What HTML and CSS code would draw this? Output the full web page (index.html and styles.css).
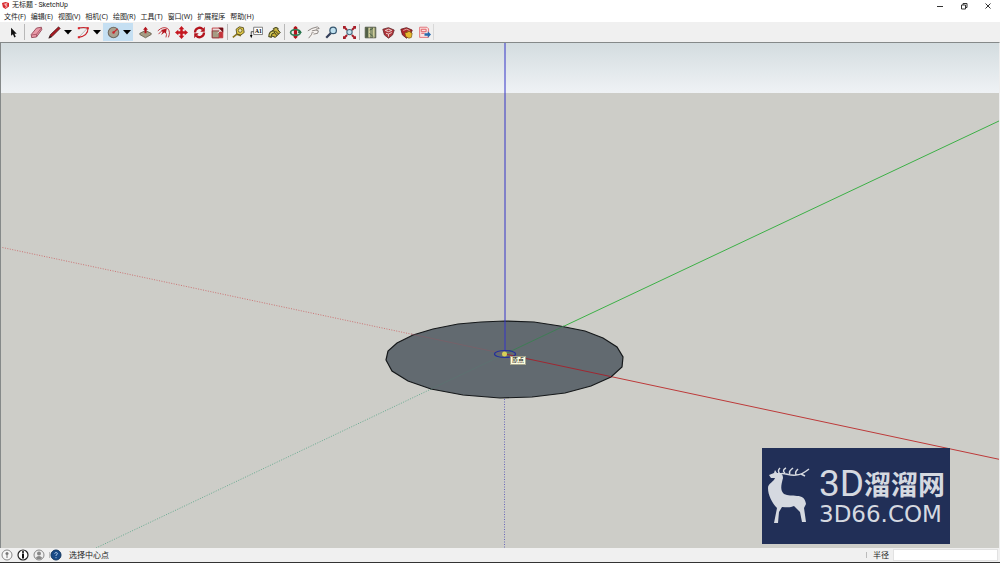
FILE: index.html
```html
<!DOCTYPE html>
<html lang="zh-CN">
<head>
<meta charset="utf-8">
<title>无标题 - SketchUp</title>
<link rel="stylesheet" href="styles.css">
</head>
<body>
<div class="app">
  <header class="titlebar">
    <svg class="app-icon" viewBox="0 0 8 8"><path d="M0 1l4-1 4 1v4L4 8 1 6z" fill="#d8262c"/><path d="M2 2.600l3-.8 1 .5-2.500.7v.8l2 .3v1.500L3.500 6" fill="none" stroke="#fff" stroke-width=".7"/></svg>
    <h1 class="title">无标题 - SketchUp</h1>
    <div class="window-buttons">
      <button aria-label="最小化"><svg viewBox="0 0 8 8"><path d="M1 4.500h6"/></svg></button>
      <button aria-label="还原"><svg viewBox="0 0 8 8"><path d="M1.500 3h4v4h-4zM3 3V1.500h4v4H5.500"/></svg></button>
      <button aria-label="关闭"><svg viewBox="0 0 8 8"><path d="M1.500 1.500l5 5M6.500 1.500l-5 5"/></svg></button>
    </div>
  </header>
  <nav class="menubar">
    <button>文件(F)</button><button>编辑(E)</button><button>视图(V)</button><button>相机(C)</button><button>绘图(R)</button><button>工具(T)</button><button>窗口(W)</button><button>扩展程序</button><button>帮助(H)</button>
  </nav>
  <div class="toolbar" role="toolbar">
    <button class="tool" aria-label="选择"><svg viewBox="0 0 16 16"><path d="M5 2v10l2.300-2 1.700 4 1.800-.8L9.200 9.400H12z" fill="#111"/></svg></button>
    <span class="separator wide"></span>
    <button class="tool" aria-label="擦除"><svg viewBox="0 0 16 16"><path d="M1.500 10.500L8 2.500l6-1 .5 3-6.500 9-6 .8z" fill="#e99aa8" stroke="#8b3b4b"/><path d="M2 11l6-.8 6-7.700M8 10.200v3" fill="none" stroke="#a34b5c"/></svg></button>
    <div class="split">
      <button class="tool" aria-label="直线"><svg viewBox="0 0 16 16"><path d="M1 15l2-4.500L13 1l2 2L5 13z" fill="#a81a22" stroke="#3f1518" stroke-width=".8"/><path d="M1 15l1.500-3.200L4.500 13.500z" fill="#222"/></svg></button>
      <button class="arrow" aria-label="直线选项"><svg viewBox="0 0 8 6"><path d="M0 1h8L4 5.500z"/></svg></button>
    </div>
    <div class="split">
      <button class="tool" aria-label="圆弧"><svg viewBox="0 0 16 16"><path d="M2 2.500h11L2 14" fill="none" stroke="#999" stroke-width=".8"/><path d="M2 2.500Q8 1 13.500 2.500Q14 12 2 14" fill="none" stroke="#c9232b" stroke-width="1.300"/><path d="M1 1.500h2.500V4H1zM12 1.500h2.500V4H12zM1 12.500h2.500V15H1z" fill="#d8262c"/></svg></button>
      <button class="arrow" aria-label="圆弧选项"><svg viewBox="0 0 8 6"><path d="M0 1h8L4 5.500z"/></svg></button>
    </div>
    <div class="split active">
      <button class="tool" aria-label="圆"><svg viewBox="0 0 16 16"><circle cx="8" cy="8" r="6.500" fill="#a9a190" stroke="#6f6a60" stroke-width="1.300"/><path d="M8 8l5-4.500" stroke="#c9232b" stroke-width="1.400"/><circle cx="8" cy="8" r="1.500" fill="#c9232b"/></svg></button>
      <button class="arrow" aria-label="形状选项"><svg viewBox="0 0 8 6"><path d="M0 1h8L4 5.500z"/></svg></button>
    </div>
    <div class="group">
      <button class="tool" aria-label="推拉"><svg viewBox="0 0 16 16"><path d="M1 9l7-3.500L15 9v1.500L8 14.500 1 10.500z" fill="#a59c84" stroke="#59523f" stroke-width=".9"/><path d="M8 1l3 3.500H9.200V9H6.800V4.500H5z" fill="#b3131c"/></svg></button>
      <button class="tool" aria-label="路径跟随"><svg viewBox="0 0 16 16"><path d="M1 6Q7 0 13 3q4 4 1 11M2 10Q6 4 10 7q3 3 1 7" fill="none" stroke="#b92730" stroke-width="1.100"/><path d="M5 5l7-2-1 6-2-1-4 3 2-4z" fill="#b3131c"/></svg></button>
      <button class="tool" aria-label="移动"><svg viewBox="0 0 16 16"><path d="M8 0l3.500 4H9.500v2.500H12v-2L16 8l-4 3.500v-2H9.500V12h2L8 16l-3.500-4h2V9.500H4v2L0 8l4-3.500v2h2.500V4h-2z" fill="#c5161f"/></svg></button>
      <button class="tool" aria-label="旋转"><svg viewBox="0 0 16 16"><path d="M2.500 8a5.500 5.500 0 0 1 9.500-4M13.500 8a5.500 5.500 0 0 1-9.500 4" fill="none" stroke="#b3131c" stroke-width="2.800"/><path d="M14.500 1v6H9zM1.500 15V9H7z" fill="#b3131c"/></svg></button>
      <button class="tool" aria-label="缩放"><svg viewBox="0 0 16 16"><path d="M1.500 2.500h13v12h-13z" fill="#e9dada" stroke="#bd2730"/><path d="M1.500 6h8.500v8.500H1.500z" fill="#a59c84" stroke="#8b3034"/><path d="M10 7h4.500v7.500H10z" fill="#c4343c"/><path d="M8 9l4-4" stroke="#fff"/><path d="M9 2h6v6z" fill="#701018"/></svg></button>
    </div>
    <span class="separator"></span>
    <button class="tool" aria-label="卷尺"><svg viewBox="0 0 16 16"><path d="M1 14l5-4 5 2" fill="none" stroke="#88751f" stroke-width="2"/><path d="M5 4l4-3 5 1 1 6-4 3-5-1z" fill="#dec643" stroke="#4b431c"/><circle cx="10" cy="5.500" r="2.300" fill="#f1e9b0" stroke="#5e5526"/></svg></button>
    <button class="tool" aria-label="文字"><svg viewBox="0 0 16 16"><path d="M4.500 1.500h11v9h-11z" fill="#fff" stroke="#666"/><text class="glyph" x="6" y="8.500">A1</text><path d="M4.500 7H1.500v6" fill="none" stroke="#333"/><path d="M0 11h3l-1.500 4z"/></svg></button>
    <button class="tool" aria-label="材质"><svg viewBox="0 0 16 16"><path d="M4 7l6-5 5 6-6 6-5-2z" fill="#c8b238" stroke="#393516" stroke-width="1.200"/><path d="M6 4q4-4 7 0M1 13q0-7 6-7 2 1 0 3-3 0-3 5z" fill="#d8cf62" stroke="#4b491c" stroke-width="1.300"/><path d="M9 6l4 4M8 8l3 4" stroke="#3d3b1d" stroke-width="1.200"/></svg></button>
    <span class="separator"></span>
    <button class="tool" aria-label="环绕观察"><svg viewBox="0 0 16 16"><path d="M8 1v13" stroke="#b3131c" stroke-width="4"/><ellipse cx="8" cy="8" rx="6" ry="3.500" fill="none" stroke="#36815a" stroke-width="2.200"/><path d="M5 3l3-3 3 3zM5 13l3 3 3-3z" fill="#b3131c"/><path d="M8 5v4" stroke="#b3131c" stroke-width="3"/><path d="M12 4l4 4-5 1z" fill="#26704a"/></svg></button>
    <button class="tool" aria-label="平移"><svg viewBox="0 0 16 16"><path d="M2 15l3-4-1-4 2-4 7-2 2 2-2 1 1 2-1 3-4 1-2 3-3 2z" fill="#f7f3f0"/><path d="M2 15l4-5M1 6l5-3 7-2 2 2-4 1M6 6l5-1 3 1-1 3-5 1M5 9l3-1" fill="none" stroke="#77706c" stroke-width="1"/></svg></button>
    <button class="tool" aria-label="缩放视图"><svg viewBox="0 0 16 16"><path d="M1.500 14.500L7 9" stroke="#333e59" stroke-width="2.800"/><circle cx="10" cy="5.500" r="4" fill="#bfe0ef" stroke="#36566f" stroke-width="1.500"/></svg></button>
    <button class="tool" aria-label="充满视窗"><svg viewBox="0 0 16 16"><path d="M1 1l4 4M15 1l-4 4M1 15l4-4M15 15l-4-4" stroke="#a71e29" stroke-width="2.400"/><path d="M0 0h4L0 4zM16 0h-4l4 4zM0 16v-4l4 4zM16 16v-4l-4 4z" fill="#a71e29"/><circle cx="8" cy="7.500" r="3.300" fill="#c2e2ee" stroke="#46677c" stroke-width="1.300"/></svg></button>
    <span class="separator"></span>
    <button class="tool" aria-label="添加位置"><svg viewBox="0 0 16 16"><path d="M1.500 1.500h13v13h-13z" fill="#8f9873" stroke="#414637"/><path d="M2 2h3v12H2z" fill="#526047"/><path d="M6.500 2v12M12 2v12" stroke="#d9d5a0" stroke-width="1.500"/><path d="M7 5l4-2M7 9l4 4" fill="none" stroke="#354f39"/></svg></button>
    <button class="tool" aria-label="3D 模型库"><svg viewBox="0 0 16 16"><path d="M1 4l7-2 7 3-2 6-5 4-5-4z" fill="#b0343a" stroke="#642a2d"/><path d="M4 5.500l4-1.500 4 1.500-4 1.500zM5 9l3 1 4-2M8 10v3" fill="none" stroke="#edd3d0" stroke-width="1.200"/></svg></button>
    <button class="tool" aria-label="扩展程序库"><svg viewBox="0 0 16 16"><path d="M1 4l7-2 7 3-2 6-5 4-5-4z" fill="#b0242b" stroke="#641a1d"/><path d="M4 5.500l4-1.500 4 1.500" fill="none" stroke="#ecc9be"/><path d="M6 8h3V6l2 1 2-1v2l2 1-1 5-3 1-4-2z" fill="#e7b92e" stroke="#725016" stroke-width=".8"/></svg></button>
    <button class="tool" aria-label="LayOut"><svg viewBox="0 0 16 16"><path d="M2 1.500h9l2 2V14H2z" fill="#fae2e1" stroke="#e06067"/><path d="M4 4h6v3H4zM4 9h4" fill="none" stroke="#e06067" stroke-width="1.200"/><path d="M8 9h4V6.500l4 4-4 4V12H8z" fill="#2769ac"/></svg></button>
    <span class="separator end"></span>
  </div>
  <main class="viewport">
    <svg class="scene" viewBox="1 43 998 505" preserveAspectRatio="none">
      <defs><linearGradient id="sky" x1="0" y1="0" x2="0" y2="1"><stop offset="0" stop-color="#d3dcdf"/><stop offset="1" stop-color="#eff2f5"/></linearGradient></defs>
      <path d="M0 42h1000v506H0z" fill="#cdcdc8"/>
      <path d="M0 42h1000v51H0z" fill="url(#sky)"/>
      <g class="axis">
        <path d="M505 354L1000 459.500" stroke="#bd3a3a"/>
        <path d="M505 354L1000 120.500" stroke="#3cb046"/>
        <path class="dotted" d="M0 247L505 354" stroke="#cc7474"/>
        <path class="dotted" d="M96 548L505 354" stroke="#68ab91"/>
        <path class="dotted" d="M504.500 354V548" stroke="#6868b8"/>
      </g>
      <path class="disc" d="M386 360L388 351 397 343 413 335 433 329 458 324 481 322 505 321 534 322 560 326 585 331 603 338 617 347 623 357 622 367 611 377 591 386 565 393 532 397 500 398 463 395 431 389 408 381 392 371z"/>
      <g class="axis">
        <path d="M505 354L611 376.600" stroke="#9f2731"/>
        <path d="M505 354L564 326" stroke="#3f7d55"/>
        <path class="faint" d="M411 334L505 354" stroke="#8a5862"/>
        <path class="faint" d="M431 389L505 354" stroke="#57776f"/>
        <path d="M505 42V354" stroke="#3434c8"/>
      </g>
      <ellipse class="cursor-ring" cx="505" cy="354" rx="10.500" ry="3.500"/>
      <circle cx="504.500" cy="354" r="2.500" fill="#d6cf57"/>
    </svg>
    <span class="tooltip">原点</span>
    <div class="brand">
      <svg class="deer" viewBox="0 0 42 58"><path d="M1 8l5-2 1-3 2 3c5 0 6 2 6 5-2 8-3 12 1 16 4 2 8 1 13 2 5 0 8 2 9 8l-2 4 2 14h-4l-2-10-6-6c-4 2-8 1-12 1l-3 5-1 11H6l3-15C4 36 0 28 0 21c0-5 6-6 7-10H3z"/><path class="antlers" d="M12 7C9 4 11 2 12 1M12 7c4-2 9 2 16 1 5 0 8-2 13-6M17 6c-3-2-1-4 1-5M22 7c-2-3 1-4 3-6M28 8c-1-3 0-4 2-6M33 7l4 2"/></svg>
      <div class="brand-text">
        <div class="brand-name"><span class="latin">3D</span>溜溜网</div>
        <div class="brand-url">3D66.COM</div>
      </div>
    </div>
  </main>
  <footer class="statusbar">
    <button class="status-icon" aria-label="地理位置"><svg viewBox="0 0 12 12"><circle cx="6" cy="6" r="5" fill="#f7f7f7" stroke="#888"/><path d="M6 9V6" stroke="#777"/><circle cx="6" cy="4.500" r="1.500" fill="#777"/></svg></button>
    <button class="status-icon" aria-label="作者信息"><svg viewBox="0 0 12 12"><circle cx="6" cy="6" r="5" fill="#fff" stroke="#222" stroke-width="1.200"/><path d="M6 4.500V9.500" stroke="#111" stroke-width="2"/><circle cx="6" cy="3" r="1"/></svg></button>
    <button class="status-icon" aria-label="登录"><svg viewBox="0 0 12 12"><circle cx="6" cy="6" r="5" fill="#eee" stroke="#888"/><circle cx="6" cy="4.500" r="2" fill="#888"/><path d="M2.500 9q3.500-4 7 0-3.500 2.500-7 0" fill="#888"/></svg></button>
    <span class="status-divider"></span>
    <button class="status-icon help" aria-label="帮助"><svg viewBox="0 0 12 12"><circle cx="6" cy="6" r="5" fill="#194a87" stroke="#12365f"/><path d="M4.500 4.500Q6 2.500 7.500 4.300 7.500 5.500 6 6.200V7M6 8.200v1" fill="none" stroke="#a8c4e3"/></svg></button>
    <span class="hint">选择中心点</span>
    <span class="status-divider measure"></span>
    <label for="radius">半径</label>
    <input id="radius" type="text">
  </footer>
</div>
</body>
</html>
```
FILE: styles.css
```css
* { box-sizing: border-box; }
body { margin: 0; font-family: "Noto Sans", "Noto Sans CJK SC", sans-serif; color: #222; }
button { margin: 0; padding: 0; border: 0; background: none; color: inherit; font: inherit; }
svg { display: block; }
.app { display: flex; flex-direction: column; height: 100vh; background: #f0f0f0; border-bottom: 1px solid #333; }

.titlebar { display: flex; align-items: center; height: 11px; padding-left: 2px; background: #fff; }
.app-icon { width: 7px; height: 7px; }
.title { margin: 0 0 0 3px; font: 400 7px/11px Roboto, "Noto Sans CJK SC", sans-serif; }
.window-buttons { display: flex; margin-left: auto; }
.window-buttons button { display: grid; place-items: center; width: 24px; height: 11px; }
.window-buttons svg { width: 8px; height: 8px; fill: none; stroke: #333; stroke-width: 1; }

.menubar { display: flex; gap: 5px; height: 11px; padding-left: 4px; background: #fff; font-size: 7px; line-height: 11px; }

.toolbar { display: flex; align-items: center; height: 20px; padding-left: 4px; }
.group { display: flex; margin-left: 3px; }
.split { display: flex; }
.split + .split { margin-left: 1px; }
.split.active { padding: 0 1px; background: #c5dff2; }
.tool { display: grid; place-items: center; width: 18px; height: 18px; }
.tool svg { width: 13px; height: 13px; }
.glyph { font: 700 7px "Liberation Serif", serif; }
.arrow { display: grid; place-items: center; width: 10px; }
.arrow svg { width: 8px; height: 6px; }
.separator { width: 1px; height: 16px; margin: 0 1px; background: #b8b8b8; }
.separator.wide { margin: 0 2px; }
.separator.end { margin: 0; background: #d8d8d8; }

.viewport { position: relative; flex: 1; min-height: 0; border-top: 1px solid #858989; border-left: 1px solid #858989; border-right: 1px solid #eee; overflow: hidden; }
.scene { width: 100%; height: 100%; }
.axis { fill: none; stroke-width: 1; }
.dotted { stroke-dasharray: 1 1.500; }
.faint { opacity: 0.5; }
.disc { fill: #626a70; stroke: #15181a; stroke-width: 1.200; }
.cursor-ring { fill: none; stroke: #24309b; stroke-width: 1.200; }
.tooltip { position: absolute; left: 51%; top: 62%; padding: 0 1px; border: 1px solid #a5a58e; background: #ffffe1; font-size: 6px; line-height: 7px; color: #000; }

.brand { position: absolute; right: 49px; bottom: 4px; display: flex; align-items: center; gap: 9px; width: 188px; height: 96px; padding: 0 6px; background: #212f57; color: #d5d9e0; }
.deer { flex: none; width: 42px; height: 58px; fill: currentColor; }
.antlers { fill: none; stroke: currentColor; stroke-width: 1.500; }
.brand-text { white-space: nowrap; }
.brand-name { display: flex; align-items: center; height: 34px; margin-bottom: 2px; font: 700 27px/34px "Noto Sans CJK SC", sans-serif; }
.latin { font: 400 37px/34px Roboto, sans-serif; }
.brand-url { font: 400 23px/22px "DejaVu Sans", sans-serif; }

.statusbar { display: flex; align-items: center; height: 14px; padding-left: 1px; font-size: 8px; line-height: 14px; }
.status-icon { width: 12px; height: 12px; margin-right: 4px; }
.status-divider { width: 1px; height: 6px; background: #bbb; }
.help { margin-right: 7px; }
.measure { margin-left: auto; margin-right: 6px; }
.statusbar input { width: 105px; height: 12px; margin: 0 2px 0 4px; padding: 0 2px; border: 1px solid #e2e2e2; background: #fff; font: inherit; }
```
